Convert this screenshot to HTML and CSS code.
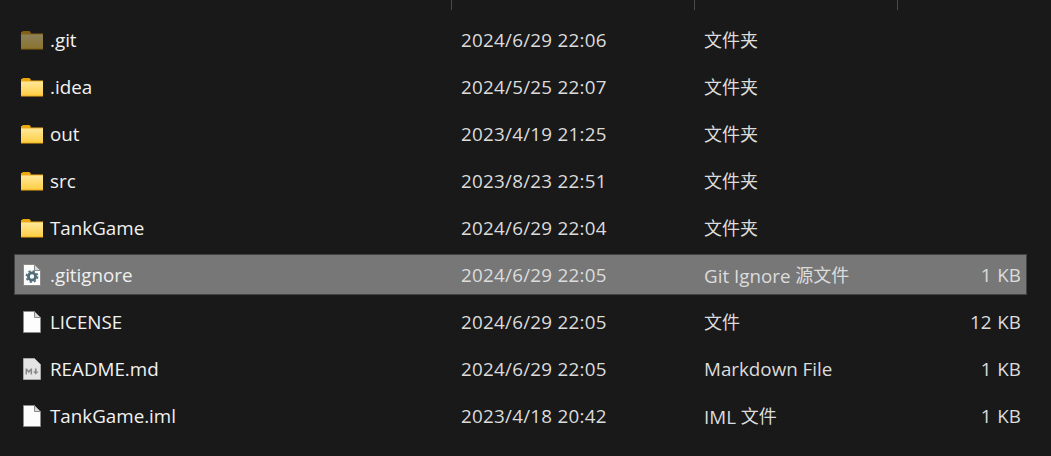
FILE: index.html
```html
<!DOCTYPE html>
<html lang="zh-CN">
<head>
    <meta charset="UTF-8">
    <title>TankGame</title>
    <link rel="stylesheet" href="styles.css">
</head>
<body>
    <svg class="defs" width="0" height="0">
        <defs>
            <linearGradient id="folderFront" x1="0" y1="0" x2="0" y2="1">
                <stop offset="0" stop-color="#ffe89b"/>
                <stop offset="1" stop-color="#ffce45"/>
            </linearGradient>
            <symbol id="folder" viewBox="0 0 24 20">
                <path d="M2 2.5C2 1.7 2.5 1 3.3 1H9.5L11.5 3.5H2Z" fill="#e8a30f"/>
                <rect x="1" y="2" width="9" height="2.5" fill="#eaa70f"/>
                <rect x="1" y="3.5" width="22" height="16" fill="#efac16"/>
                <rect x="1" y="4.5" width="22" height="14" fill="url(#folderFront)"/>
            </symbol>
            <symbol id="doc" viewBox="0 0 18 22">
                <path d="M.5.5H11.5L17.5 6.5V21.5H.5Z" fill="#fdfdfd" stroke="#8b8b8b"/>
                <path d="M11.5.5V6.5H17.5Z" fill="#d9d9d9" stroke="#8b8b8b"/>
            </symbol>
        </defs>
    </svg>
    <div class="dividers">
        <span class="divider col-name"></span>
        <span class="divider col-date"></span>
        <span class="divider col-type"></span>
    </div>
    <ul class="files">
        <li class="row">
            <div class="col-name name"><svg class="icon dim"><use href="#folder"/></svg>.git</div>
            <div class="col-date">2024/6/29 22:06</div>
            <div class="col-type"><span class="cjk">文件夹</span></div>
            <div class="col-size"></div>
        </li>
        <li class="row">
            <div class="col-name name"><svg class="icon"><use href="#folder"/></svg>.idea</div>
            <div class="col-date">2024/5/25 22:07</div>
            <div class="col-type"><span class="cjk">文件夹</span></div>
            <div class="col-size"></div>
        </li>
        <li class="row">
            <div class="col-name name"><svg class="icon"><use href="#folder"/></svg>out</div>
            <div class="col-date">2023/4/19 21:25</div>
            <div class="col-type"><span class="cjk">文件夹</span></div>
            <div class="col-size"></div>
        </li>
        <li class="row">
            <div class="col-name name"><svg class="icon"><use href="#folder"/></svg>src</div>
            <div class="col-date">2023/8/23 22:51</div>
            <div class="col-type"><span class="cjk">文件夹</span></div>
            <div class="col-size"></div>
        </li>
        <li class="row">
            <div class="col-name name"><svg class="icon"><use href="#folder"/></svg>TankGame</div>
            <div class="col-date">2024/6/29 22:04</div>
            <div class="col-type"><span class="cjk">文件夹</span></div>
            <div class="col-size"></div>
        </li>
        <li class="row selected">
            <div class="col-name name">
                <svg class="icon doc" viewBox="0 0 18 22">
                    <use href="#doc"/>
                    <circle cx="9" cy="12.5" r="3.6" fill="none" stroke="#4f6a78" stroke-width="2.8"/>
                    <circle cx="9" cy="12.5" r="5.6" fill="none" stroke="#4f6a78" stroke-width="1.6" stroke-dasharray="2.2 2.2"/>
                </svg>.gitignore
            </div>
            <div class="col-date">2024/6/29 22:05</div>
            <div class="col-type">Git Ignore <span class="cjk">源文件</span></div>
            <div class="col-size">1 KB</div>
        </li>
        <li class="row">
            <div class="col-name name"><svg class="icon doc"><use href="#doc"/></svg>LICENSE</div>
            <div class="col-date">2024/6/29 22:05</div>
            <div class="col-type"><span class="cjk">文件</span></div>
            <div class="col-size">12 KB</div>
        </li>
        <li class="row">
            <div class="col-name name">
                <svg class="icon doc" viewBox="0 0 18 22">
                    <path d="M.5.5H11.5L17.5 6.5V21.5H.5Z" fill="#e4e4e4" stroke="#a8a8a8"/>
                    <path d="M2.5 16.5V10.5H4L5.8 12.8L7.6 10.5H9.1V16.5H7.6V13L5.8 15.2L4 13V16.5Z" fill="#8a8a8a"/>
                    <path d="M11.9 10.5H13.6V13.5H15.5L12.75 16.5L10 13.5H11.9Z" fill="#8a8a8a"/>
                </svg>README.md
            </div>
            <div class="col-date">2024/6/29 22:05</div>
            <div class="col-type">Markdown File</div>
            <div class="col-size">1 KB</div>
        </li>
        <li class="row">
            <div class="col-name name"><svg class="icon doc"><use href="#doc"/></svg>TankGame.iml</div>
            <div class="col-date">2023/4/18 20:42</div>
            <div class="col-type">IML <span class="cjk">文件</span></div>
            <div class="col-size">1 KB</div>
        </li>
    </ul>
</body>
</html>
```

FILE: styles.css
```css
html, body {
    height: 100%;
}
body {
    margin: 0;
    background-color: #191919;
    color: #f2f2f2;
    font-family: "Open Sans", "Noto Sans CJK SC", sans-serif;
    font-size: 18.8px;
    overflow: hidden;
}
.defs {
    display: block;
    height: 0;
}
.dividers {
    display: flex;
    height: 10px;
    padding-left: 15px;
}
.divider {
    border-right: 1px solid #4a4a4a;
    box-sizing: border-box;
}
.dividers .col-name {
    flex: 0 0 437px;
}
.dividers .col-date {
    flex: 0 0 243px;
}
.dividers .col-type {
    flex: 0 0 203px;
}
.files {
    list-style: none;
    margin: 0;
    padding: 9px 24px 0 14px;
    display: flex;
    flex-direction: column;
    gap: 6px;
}
.row {
    display: flex;
    align-items: center;
    height: 41px;
    padding-top: 1px;
    border: 1px solid transparent;
    box-sizing: border-box;
    white-space: nowrap;
}
.row.selected {
    background-color: #777777;
    border-color: #434343;
    color: #f0f0f0;
}
.cjk {
    font-size: 18px;
    vertical-align: 1px;
}
.col-name {
    flex: 0 0 446px;
}
.col-date {
    flex: 0 0 243px;
    color: #dcdcdc;
    letter-spacing: 0.27px;
}
.col-type {
    flex: 0 0 203px;
    color: #dcdcdc;
}
.col-size {
    flex: 1;
    text-align: right;
    padding-right: 5px;
    color: #dcdcdc;
    word-spacing: 1px;
}
.name {
    display: flex;
    align-items: center;
}
.icon {
    width: 24px;
    height: 20px;
    margin-left: 5px;
    margin-right: 6px;
}
.icon.dim {
    opacity: 0.5;
}
.icon.doc {
    width: 18px;
    height: 22px;
    margin-left: 8px;
    margin-right: 9px;
}
```
